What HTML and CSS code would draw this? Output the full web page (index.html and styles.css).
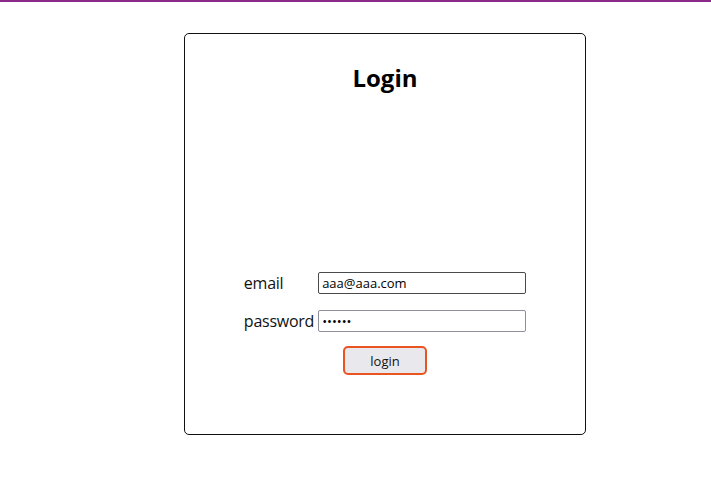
FILE: index.html
```html
<!DOCTYPE html>
<html lang="en">
<head>
    <meta charset="UTF-8">
    <meta name="viewport" content="width=device-width, initial-scale=1.0">
    <title>Login</title>
<link rel="stylesheet" href="styles.css">
</head>
<body>
    <div class="topbar"></div>
    <div class="card">
        <h1>Login</h1>
        <form class="login-form">
            <div class="fields">
                <label for="email" class="label">email</label>
                <input id="email" class="field field-active" type="text" value="aaa@aaa.com">
                <label for="password" class="label">password</label>
                <input id="password" class="field" type="password" value="aaaaaa">
            </div>
            <button type="button" class="login-button">login</button>
        </form>
    </div>
</body>
</html>
```

FILE: styles.css
```css
body {
    margin: 0;
    font-family: "Open Sans", "Noto Sans", sans-serif;
    background-color: #ffffff;
    color: #111111;
}

.topbar {
    height: 2px;
    background-color: #8c2a8c;
}

.card {
    box-sizing: border-box;
    width: 402px;
    height: 402px;
    margin: 31px 0 0 184px;
    border: 1px solid #111111;
    border-radius: 5px;
    display: flex;
    flex-direction: column;
    align-items: center;
}

.card h1 {
    margin: 27px 0 0;
    font-size: 24px;
    font-weight: 700;
    line-height: 33px;
    color: #000000;
}

.login-form {
    margin-top: 178px;
    display: flex;
    flex-direction: column;
    align-items: center;
}

.fields {
    display: grid;
    grid-template-columns: auto 208px;
    column-gap: 4px;
    row-gap: 16px;
    align-items: center;
}

.label {
    font-size: 16px;
    line-height: 22px;
    letter-spacing: -0.25px;
    color: #111111;
}

.field {
    box-sizing: border-box;
    width: 208px;
    height: 22px;
    margin: 0;
    padding: 0 3px;
    border: 1px solid #8f8f9d;
    border-radius: 2px;
    font-family: "Open Sans", "Noto Sans", sans-serif;
    font-size: 13px;
    color: #000000;
    background-color: #ffffff;
}

.field-active {
    border-color: #4a4a4a;
}

.login-button {
    box-sizing: border-box;
    width: 84px;
    height: 29px;
    margin-top: 14px;
    border: 2px solid #e95420;
    border-radius: 5px;
    background-color: #e9e9ed;
    font-family: "Open Sans", "Noto Sans", sans-serif;
    font-size: 13px;
    color: #111111;
    cursor: pointer;
}
```
